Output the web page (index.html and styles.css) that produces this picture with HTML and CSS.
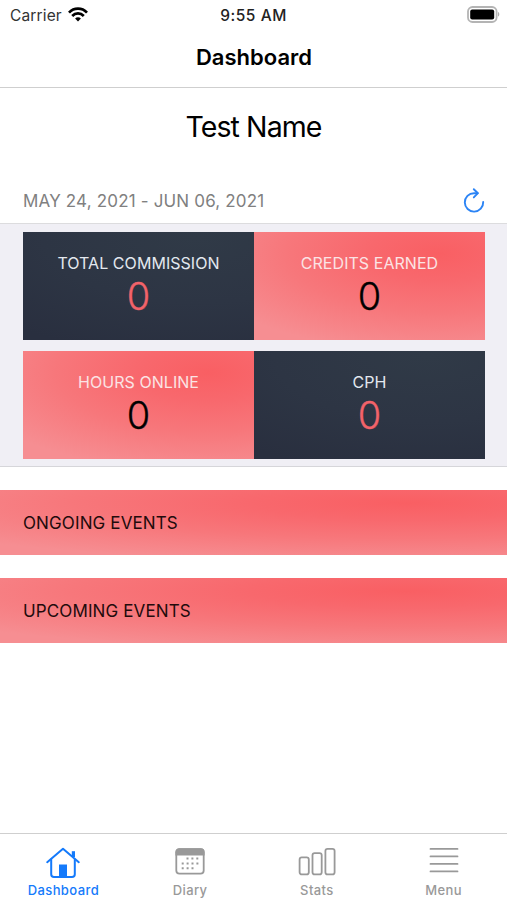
FILE: index.html
```
<!DOCTYPE html>
<html lang="en">
<head>
  <meta charset="UTF-8" />
  <meta name="viewport" content="width=device-width, initial-scale=1.0" />
  <title>Dashboard</title>
  <link rel="stylesheet" href="styles.css">
</head>
<body>
  <div class="status-bar">
    <div class="carrier">
      <span class="carrier-name">Carrier</span>
      <svg width="20" height="15" viewBox="0 0 20 15" fill="none" stroke="#000" stroke-width="2.7">
        <path d="M1 5.6C6 .4 14 .4 19 5.6" />
        <path d="M4.2 9C7.5 5.6 12.5 5.6 15.8 9" />
        <path d="M10 14.4L7.1 11.5C8.7 9.9 11.3 9.9 12.9 11.5Z" fill="#000" stroke="none" />
      </svg>
    </div>
    <span class="clock">9:55 AM</span>
    <svg class="battery" width="33" height="17" viewBox="0 0 33 17">
      <rect x="1" y="1" width="28.6" height="15" rx="4.5" fill="#fff" stroke="#b4b4b4" stroke-width="1.8" />
      <rect x="3.2" y="3.4" width="24" height="10.2" rx="2" fill="#000" />
      <path d="M31 6v4.6c1.8-.7 1.8-3.9 0-4.6z" fill="#adadad" />
    </svg>
  </div>

  <header>Dashboard</header>

  <main>
    <h1>Test Name</h1>

    <div class="period">
      <span class="dates">MAY 24, 2021 - JUN 06, 2021</span>
      <svg width="22" height="26" viewBox="0 0 22 26" fill="none" stroke="#2c84f5" stroke-width="1.9" stroke-linecap="round" stroke-linejoin="round">
        <path d="M14.6 6.2H11A9.2 9.2 0 1 0 20.2 15" />
        <path d="M10.8 2.2L14.9 6.2L10.8 10.4" />
      </svg>
    </div>

    <div class="stats">
      <div class="card dark">
        <span class="label">TOTAL COMMISSION</span>
        <span class="value">0</span>
      </div>
      <div class="card red">
        <span class="label">CREDITS EARNED</span>
        <span class="value">0</span>
      </div>
      <div class="card red">
        <span class="label">HOURS ONLINE</span>
        <span class="value">0</span>
      </div>
      <div class="card dark">
        <span class="label">CPH</span>
        <span class="value">0</span>
      </div>
    </div>

    <div class="section red"><span>ONGOING EVENTS</span></div>
    <div class="section red"><span>UPCOMING EVENTS</span></div>
  </main>

  <nav>
    <a class="tab active">
      <svg width="36" height="32" viewBox="0 0 36 32" fill="none" stroke="currentColor" stroke-width="2" stroke-linejoin="round" stroke-linecap="round">
        <path d="M2.2 15.2L18 1.8L33.8 15.2" />
        <path d="M6.2 12.4V27.2Q6.2 30 9 30H27Q29.8 30 29.8 27.2V12.4" />
        <path d="M28.4 4.2V10" stroke-width="3.2" stroke-linecap="butt" />
        <path d="M14 17.5H22V30H14Z" fill="currentColor" stroke="none" />
      </svg>
      <span>Dashboard</span>
    </a>
    <a class="tab">
      <svg width="36" height="32" viewBox="0 0 36 32" fill="none" stroke="currentColor">
        <rect x="4.3" y="2.1" width="27.4" height="24.6" rx="3.2" stroke-width="1.8" />
        <path d="M3.4 8.6V5.3Q3.4 1.2 7.5 1.2H28.5Q32.6 1.2 32.6 5.3V8.6Z" fill="currentColor" stroke="none" />
        <path d="M14.5 11.6H27M9.7 16.4H27M9.7 21.2H22" stroke-width="2" stroke-dasharray="2 2.9" />
      </svg>
      <span>Diary</span>
    </a>
    <a class="tab">
      <svg width="38" height="32" viewBox="0 0 38 32" fill="none" stroke="currentColor" stroke-width="1.8">
        <rect x="1.6" y="10.4" width="9.2" height="17" rx="2.2" />
        <rect x="14.5" y="6.1" width="9.2" height="21.3" rx="2.2" />
        <rect x="27.4" y="1.8" width="9.2" height="25.6" rx="2.2" />
      </svg>
      <span>Stats</span>
    </a>
    <a class="tab">
      <svg width="36" height="32" viewBox="0 0 36 32" stroke="currentColor" stroke-width="1.8" stroke-linecap="round">
        <path d="M4.5 1.9H31.5M4.5 9.4H31.5M4.5 16.9H31.5M4.5 24.4H31.5" />
      </svg>
      <span>Menu</span>
    </a>
  </nav>
</body>
</html>
```
FILE: styles.css
```
* {
  margin: 0;
  padding: 0;
  box-sizing: border-box;
}
body {
  font-family: 'Inter', sans-serif;
  background: #fff;
  color: #000;
  display: flex;
  flex-direction: column;
  height: 100vh;
  overflow: hidden;
}
svg {
  display: block;
  flex: none;
}
.status-bar {
  height: 30px;
  padding: 0 7px 2px 10px;
  display: grid;
  grid-template-columns: 1fr auto 1fr;
  align-items: center;
}
.carrier {
  display: flex;
  align-items: center;
  gap: 6px;
}
.carrier-name {
  font-size: 15.5px;
  letter-spacing: 0.15px;
  color: #333;
  padding-top: 2px;
}
.clock {
  font-size: 15.5px;
  font-weight: 500;
  letter-spacing: 0.55px;
  color: #222;
  padding-top: 2px;
  margin-right: 3px;
}
.battery {
  justify-self: end;
}
header {
  height: 58px;
  border-bottom: 1px solid #cfcfcf;
  line-height: 55px;
  font-size: 22px;
  font-weight: 600;
  text-align: center;
  padding-left: 1px;
}
main {
  flex: 1;
}
h1 {
  height: 90px;
  line-height: 78px;
  font-size: 28.5px;
  font-weight: 400;
  letter-spacing: -0.9px;
  text-align: center;
}
.period {
  height: 46px;
  padding: 0 22px 2px 23px;
  display: flex;
  justify-content: space-between;
  align-items: center;
  border-bottom: 1px solid #dcdcde;
}
.dates {
  font-size: 17px;
  letter-spacing: 0.17px;
  padding-top: 3px;
  color: #808080;
}
.stats {
  height: 243px;
  padding: 8px 22px 0 23px;
  display: grid;
  grid-template-columns: 231px 231px;
  grid-template-rows: 108px 108px;
  row-gap: 10.5px;
  background: #f0eff5;
  border-bottom: 1px solid #d6d6da;
}
.card {
  padding-top: 20px;
  display: flex;
  flex-direction: column;
  align-items: center;
}
.red {
  background: radial-gradient(ellipse 110% 92% at 80% 20%, #f95f63 0%, #f8686d 28%, #f7777b 60%, #f68e92 100%);
}
.dark {
  background: radial-gradient(ellipse 120% 110% at 75% 5%, #303a47 0%, #2d3544 55%, #292f3f 100%);
}
.label {
  line-height: 22px;
  font-size: 16px;
  letter-spacing: 0.05px;
  color: #fbe3e4;
}
.dark .label {
  color: #e3e8ef;
}
.value {
  line-height: 44px;
  font-size: 38px;
  font-weight: 300;
  -webkit-text-stroke: 0.3px currentColor;
}
.dark .value {
  color: #f2636a;
}
.section {
  height: 65px;
  margin-top: 23px;
  padding: 1px 0 0 23px;
  line-height: 65px;
  font-size: 17px;
  letter-spacing: 0.12px;
  color: #220b0c;
}
nav {
  height: 67px;
  padding-top: 13px;
  display: grid;
  grid-template-columns: repeat(4, 1fr);
  border-top: 1px solid #cfcfcf;
}
.tab {
  display: flex;
  flex-direction: column;
  align-items: center;
  font-size: 13px;
  font-weight: 500;
  letter-spacing: 0.4px;
  line-height: 22px;
  color: #999;
}
.active {
  color: #147afb;
}
```
